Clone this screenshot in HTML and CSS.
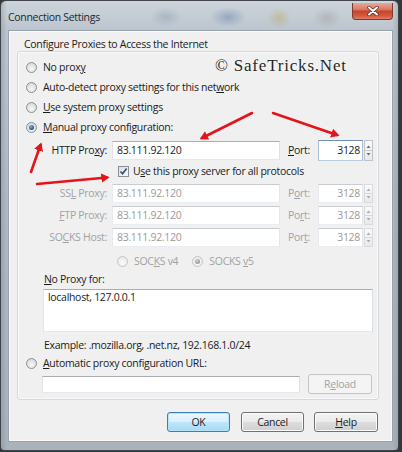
FILE: index.html
```html
<!DOCTYPE html>
<html lang="en">
<head>
<meta charset="utf-8">
<title>Connection Settings</title>
<link rel="stylesheet" href="styles.css">
</head>
<body>
<div class="window">
  <div class="titlebar">
    <span class="title">Connection Settings</span>
    <span class="close">
      <svg width="12" height="10" viewBox="0 0 12 10"><path d="M2 1.5 L10 8.5 M10 1.5 L2 8.5" stroke="#5a2a20" stroke-width="3.4" stroke-linecap="round"/><path d="M2 1.5 L10 8.5 M10 1.5 L2 8.5" stroke="#ffffff" stroke-width="2" stroke-linecap="round"/></svg>
    </span>
  </div>
  <div class="client">
    <div class="caption">Configure Proxies to Access the Internet</div>
    <div class="group">
      <div class="opt"><span class="radio"></span><span>No prox<u>y</u></span></div>
      <div class="opt"><span class="radio"></span><span>Auto-detect proxy settings for this net<u>w</u>ork</span></div>
      <div class="opt"><span class="radio"></span><span><u>U</u>se system proxy settings</span></div>
      <div class="opt"><span class="radio on"></span><span><u>M</u>anual proxy configuration:</span></div>

      <div class="prow first">
        <span class="plabel">HTTP Pro<u>x</u>y:</span>
        <span class="field">83.111.92.120</span>
        <span class="portlabel"><u>P</u>ort:</span>
        <span class="port big">
          <span class="pval focus">3128</span>
          <span class="spin"><svg width="7" height="19" viewBox="0 0 7 19"><path d="M1.5 7 L3.5 4.5 L5.5 7Z M1.5 12 L3.5 14.5 L5.5 12Z" fill="#6b6f74"/><path d="M0 9.5 H7" stroke="#c9ccd0"/></svg></span>
        </span>
      </div>

      <div class="crow"><span class="check"><svg width="9" height="9" viewBox="0 0 9 9"><path d="M1.5 4.5 L3.6 6.8 L7.6 1.6" fill="none" stroke="#2c4a8a" stroke-width="1.6"/></svg></span><span>U<u>s</u>e this proxy server for all protocols</span></div>

      <div class="prow ssl dis">
        <span class="plabel">SS<u>L</u> Proxy:</span>
        <span class="field">83.111.92.120</span>
        <span class="portlabel">P<u>o</u>rt:</span>
        <span class="port">
          <span class="pval">3128</span>
          <span class="spin"><svg width="7" height="17" viewBox="0 0 7 17"><path d="M1.5 6 L3.5 3.5 L5.5 6Z M1.5 11 L3.5 13.5 L5.5 11Z" fill="#a9adb1"/><path d="M0 8.5 H7" stroke="#d6d8db"/></svg></span>
        </span>
      </div>
      <div class="prow dis">
        <span class="plabel"><u>F</u>TP Proxy:</span>
        <span class="field">83.111.92.120</span>
        <span class="portlabel">Po<u>r</u>t:</span>
        <span class="port">
          <span class="pval">3128</span>
          <span class="spin"><svg width="7" height="17" viewBox="0 0 7 17"><path d="M1.5 6 L3.5 3.5 L5.5 6Z M1.5 11 L3.5 13.5 L5.5 11Z" fill="#a9adb1"/><path d="M0 8.5 H7" stroke="#d6d8db"/></svg></span>
        </span>
      </div>
      <div class="prow dis">
        <span class="plabel">SO<u>C</u>KS Host:</span>
        <span class="field">83.111.92.120</span>
        <span class="portlabel">Por<u>t</u>:</span>
        <span class="port">
          <span class="pval">3128</span>
          <span class="spin"><svg width="7" height="17" viewBox="0 0 7 17"><path d="M1.5 6 L3.5 3.5 L5.5 6Z M1.5 11 L3.5 13.5 L5.5 11Z" fill="#a9adb1"/><path d="M0 8.5 H7" stroke="#d6d8db"/></svg></span>
        </span>
      </div>

      <div class="vrow dis">
        <span class="radio off"></span><span class="v4">SOC<u>K</u>S v4</span>
        <span class="radio off sel"></span><span>SOCKS <u>v</u>5</span>
      </div>

      <div class="nplabel"><u>N</u>o Proxy for:</div>
      <div class="area">localhost, 127.0.0.1</div>
      <div class="example">Example: .mozilla.org, .net.nz, 192.168.1.0/24</div>

      <div class="opt"><span class="radio"></span><span><u>A</u>utomatic proxy configuration URL:</span></div>
      <div class="urow">
        <span class="url"></span>
        <span class="reload">R<u>e</u>load</span>
      </div>
    </div>
    <div class="buttons">
      <span class="btn ok">OK</span>
      <span class="btn">Cancel</span>
      <span class="btn"><u>H</u>elp</span>
    </div>
  </div>

  <div class="watermark">© SafeTricks.Net</div>

  <svg class="arrows" width="402" height="452" viewBox="0 0 402 452">
    <defs>
      <marker id="head" markerWidth="4" markerHeight="4" refX="2.2" refY="2" orient="auto" markerUnits="strokeWidth">
        <path d="M0 0.2 L3.2 2 L0 3.8 Z" fill="#e3151b"/>
      </marker>
    </defs>
    <g stroke="#e3151b" stroke-width="2.6" fill="none" stroke-linecap="round">
      <line x1="31" y1="172" x2="40.5" y2="145" marker-end="url(#head)"/>
      <line x1="37" y1="184" x2="107" y2="177.5" marker-end="url(#head)"/>
      <line x1="252" y1="113" x2="202" y2="138" marker-end="url(#head)"/>
      <line x1="273" y1="113" x2="337" y2="135" marker-end="url(#head)"/>
    </g>
  </svg>
</div>
</body>
</html>
```

FILE: styles.css
```css
* {
  box-sizing: border-box;
  margin: 0;
  padding: 0;
}

html, body {
  width: 402px;
  height: 452px;
  overflow: hidden;
}

body {
  background: #34373c;
  font-family: "Open Sans", "Noto Sans", sans-serif;
  font-size: 10.5px;
  letter-spacing: -0.3px;
  color: #1b1b1b;
}

u {
  text-decoration: underline;
  text-underline-offset: 1px;
}

.window {
  position: relative;
  width: 399px;
  height: 451px;
  border: 1px solid #3f444a;
  border-radius: 6px 6px 4px 4px;
  background:
    linear-gradient(90deg, rgba(120,128,136,0.35) 0, rgba(255,255,255,0) 6px, rgba(255,255,255,0) 391px, rgba(120,128,136,0.3) 397px),
    linear-gradient(180deg, #cdd4db 0, #bcc5ce 30px, #b1bac3 200px, #aab3bc 100%);
  display: flex;
  flex-direction: column;
}

.titlebar {
  height: 29px;
  display: flex;
  align-items: flex-start;
  padding-left: 7px;
  background:
    radial-gradient(ellipse 16px 10px at 165px 16px, rgba(150,165,180,0.55), rgba(150,165,180,0) 100%),
    radial-gradient(ellipse 18px 10px at 227px 16px, rgba(95,125,165,0.45), rgba(95,125,165,0) 100%),
    radial-gradient(ellipse 12px 11px at 278px 17px, rgba(190,170,110,0.5), rgba(190,170,110,0) 100%),
    radial-gradient(ellipse 14px 11px at 326px 17px, rgba(150,150,150,0.4), rgba(150,150,150,0) 100%);
}

.title {
  margin-top: 9px;
  line-height: 14px;
  color: #1d2833;
}

.close {
  margin-left: auto;
  margin-right: 5px;
  margin-top: 2px;
  width: 41px;
  height: 17px;
  border: 1px solid #7d3a2c;
  border-top: 0;
  border-radius: 0 0 4px 4px;
  background: linear-gradient(180deg, #e9a898 0, #da7a64 40%, #c8442c 52%, #d4583c 80%, #e0806a 100%);
  display: flex;
  align-items: center;
  justify-content: center;
}

.client {
  margin-left: 7px;
  width: 385px;
  height: 412px;
  border: 1px solid #97a2ad;
  box-shadow: inset 0 0 0 1px #fbfbfb;
  background: #f0f0f0;
  display: flex;
  flex-direction: column;
}

.caption {
  margin: 7px 0 0 15px;
  height: 13px;
  line-height: 13px;
}

.group {
  margin-left: 8px;
  width: 362px;
  border: 1px solid #d5d9dd;
  box-shadow: inset 0 0 0 1px #fafafa;
  border-radius: 3px;
  padding: 5px 0 5px 0;
  display: flex;
  flex-direction: column;
}

.opt {
  height: 20px;
  display: flex;
  align-items: center;
  padding-left: 8px;
}

.radio {
  flex: none;
  width: 11px;
  height: 11px;
  border-radius: 50%;
  border: 1px solid #8d9093;
  background: radial-gradient(circle at 50% 65%, #f7f7f7 0, #e2e2e2 55%, #cfcfcf 100%);
  margin-right: 6px;
  position: relative;
}

.radio.on::after {
  content: "";
  position: absolute;
  left: 2px;
  top: 2px;
  width: 5px;
  height: 5px;
  border-radius: 50%;
  background: radial-gradient(circle at 40% 35%, #7fb6e0 0, #24608f 60%, #173f60 100%);
}

.radio.off {
  border-color: #c3c5c7;
  background: radial-gradient(circle at 50% 65%, #fbfbfb 0, #eeeeee 60%, #e2e2e2 100%);
}

.radio.off.sel::after {
  content: "";
  position: absolute;
  left: 2px;
  top: 2px;
  width: 5px;
  height: 5px;
  border-radius: 50%;
  background: radial-gradient(circle at 40% 35%, #d0d0d0 0, #9a9a9a 70%);
}

.prow {
  height: 22px;
  display: flex;
  align-items: center;
}

.prow.first {
  margin-top: 2px;
}

.prow.ssl {
  margin-top: 1px;
}

.plabel {
  flex: none;
  width: 89px;
  text-align: right;
}

.field {
  flex: none;
  margin-left: 5px;
  width: 168px;
  height: 19px;
  border: 1px solid #abadb3;
  border-color: #abadb3 #dbdfe6 #e3e9ef #e2e3ea;
  background: #fff;
  padding-left: 4px;
  line-height: 17px;
}

.portlabel {
  flex: none;
  margin-left: 8px;
  width: 30px;
}

.port {
  flex: none;
  display: flex;
  height: 19px;
}

.port.big {
  height: 21px;
}

.pval {
  width: 45px;
  border: 1px solid #abadb3;
  border-color: #abadb3 #dbdfe6 #e3e9ef #e2e3ea;
  background: #fff;
  text-align: right;
  padding-right: 2px;
  display: flex;
  align-items: center;
  justify-content: flex-end;
}

.pval.focus {
  border-color: #6d8fb5 #a9c0da #b7cbe1 #a9c0da;
}

.spin {
  width: 9px;
  border: 1px solid #bfc3c7;
  background: linear-gradient(180deg, #fafafa, #e9e9e9);
  display: flex;
  align-items: center;
  justify-content: center;
  margin-left: 1px;
}

.dis {
  color: #a2a2a2;
}

.dis .field,
.dis .pval {
  color: #9a9a9a;
  border-color: #c9ccd1 #e5e7eb #eaedf0 #e8e9ed;
}

.dis .spin {
  border-color: #d8dadc;
}

.crow {
  height: 20px;
  display: flex;
  align-items: center;
  padding-left: 100px;
}

.check {
  flex: none;
  width: 11px;
  height: 11px;
  border: 1px solid #8d9093;
  background: linear-gradient(135deg, #dcdcdc, #fafafa);
  margin-right: 4px;
  display: flex;
  align-items: center;
  justify-content: center;
}

.vrow {
  margin-top: 2px;
  height: 22px;
  display: flex;
  align-items: center;
  padding-left: 99px;
}

.v4 {
  margin-right: 14px;
}

.nplabel {
  height: 14px;
  line-height: 14px;
  padding-left: 26px;
}

.area {
  margin: 3px 0 0 25px;
  width: 330px;
  height: 43px;
  border: 1px solid #abadb3;
  border-color: #abadb3 #dbdfe6 #e3e9ef #e2e3ea;
  background: #fff;
  padding: 0 4px;
  line-height: 15px;
}

.example {
  margin-top: 5px;
  height: 16px;
  line-height: 16px;
  padding-left: 26px;
}

.urow {
  margin-top: 1px;
  height: 20px;
  display: flex;
  align-items: center;
  padding-left: 24px;
}

.url {
  width: 258px;
  height: 17px;
  border: 1px solid #abadb3;
  border-color: #abadb3 #dbdfe6 #e3e9ef #e2e3ea;
  background: #fff;
}

.reload {
  margin-left: 8px;
  width: 64px;
  height: 20px;
  border: 1px solid #c2c5c8;
  border-radius: 3px;
  background: #f4f4f4;
  color: #a3a3a3;
  display: flex;
  align-items: center;
  justify-content: center;
}

.buttons {
  margin-top: 12px;
  padding-right: 14px;
  display: flex;
  justify-content: flex-end;
  gap: 10px;
}

.btn {
  width: 63px;
  height: 20px;
  border: 1px solid #707070;
  border-radius: 3px;
  background: linear-gradient(180deg, #f3f3f3 0, #ebebeb 48%, #dddddd 52%, #cfcfcf 100%);
  box-shadow: inset 0 0 0 1px #fbfbfb;
  display: flex;
  align-items: center;
  justify-content: center;
}

.btn:last-child {
  width: 64px;
}

.btn.ok {
  margin-right: 1px;
  border-color: #3c7fb1;
  box-shadow: inset 0 0 0 1px #b6e3f8;
  background: linear-gradient(180deg, #eaf6fd 0, #d9f0fc 48%, #bee6fd 52%, #a7d9f5 100%);
}

.watermark {
  position: absolute;
  left: 214px;
  top: 55px;
  font-family: "Liberation Serif", serif;
  font-size: 17px;
  line-height: 20px;
  letter-spacing: 0.8px;
  color: #262626;
  text-shadow: 0 0 2px #ffffff;
}

.arrows {
  position: absolute;
  left: -1px;
  top: -1px;
  pointer-events: none;
}
```
